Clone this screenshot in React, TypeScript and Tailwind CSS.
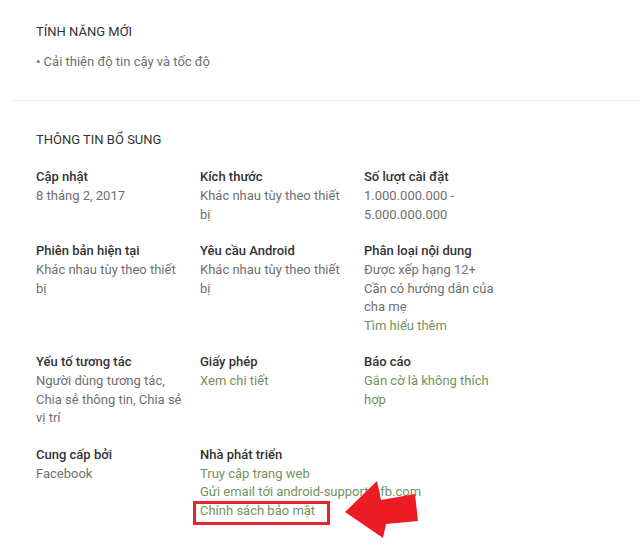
import React from 'react';

type Line = { text: string; link?: boolean; nowrap?: boolean; boxed?: boolean };
type Item = { title: string; lines: Line[] };

const items: Item[] = [
  { title: 'Cập nhật', lines: [{ text: '8 tháng 2, 2017' }] },
  { title: 'Kích thước', lines: [{ text: 'Khác nhau tùy theo thiết bị' }] },
  { title: 'Số lượt cài đặt', lines: [{ text: '1.000.000.000 - 5.000.000.000' }] },
  { title: 'Phiên bản hiện tại', lines: [{ text: 'Khác nhau tùy theo thiết bị' }] },
  { title: 'Yêu cầu Android', lines: [{ text: 'Khác nhau tùy theo thiết bị' }] },
  {
    title: 'Phân loại nội dung',
    lines: [
      { text: 'Được xếp hạng 12+' },
      { text: 'Cần có hướng dẫn của cha mẹ' },
      { text: 'Tìm hiểu thêm', link: true },
    ],
  },
  { title: 'Yếu tố tương tác', lines: [{ text: 'Người dùng tương tác, Chia sẻ thông tin, Chia sẻ vị trí' }] },
  { title: 'Giấy phép', lines: [{ text: 'Xem chi tiết', link: true }] },
  { title: 'Báo cáo', lines: [{ text: 'Gắn cờ là không thích hợp', link: true }] },
  { title: 'Cung cấp bởi', lines: [{ text: 'Facebook' }] },
  {
    title: 'Nhà phát triển',
    lines: [
      { text: 'Truy cập trang web', link: true },
      { text: 'Gửi email tới android-support@fb.com', link: true, nowrap: true },
      { text: 'Chính sách bảo mật', link: true, boxed: true },
    ],
  },
];

function InfoCell({ item }: { item: Item }) {
  return (
    <div className="w-[148px]">
      <div className="text-[13px] leading-[20px] font-medium text-[#333]">{item.title}</div>
      {item.lines.map((line) => (
        <div
          key={line.text}
          className={`text-[13px] leading-[18.5px] ${line.link ? 'text-[#73925c]' : 'text-[#6f6f6f]'} ${
            line.nowrap ? 'whitespace-nowrap' : ''
          }`}
        >
          {line.boxed ? (
            <span className="relative inline-block">
              {line.text}
              {/* red highlight box */}
              <span className="absolute -left-[7px] -right-[15px] -top-[1px] -bottom-[5px] border-[3px] border-[#e3262b]" />
            </span>
          ) : (
            line.text
          )}
        </div>
      ))}
    </div>
  );
}

export default function App() {
  return (
    <div className="relative h-[551px] w-full overflow-hidden bg-white font-['Roboto',sans-serif]">
      {/* What's new */}
      <div className="pl-9 pt-[22px] pb-[29px]">
        <h2 className="text-[13px] leading-[19px] text-[#333]">TÍNH NĂNG MỚI</h2>
        <div className="mt-[11px] text-[13px] leading-[19px] text-[#6f6f6f]">• Cải thiện độ tin cậy và tốc độ</div>
      </div>

      <div className="ml-3 border-t border-[#ececec]" />

      {/* Additional info */}
      <div className="pl-9 pt-[29px]">
        <h2 className="text-[13px] leading-[19px] text-[#333]">THÔNG TIN BỔ SUNG</h2>
        <div className="mt-[18px] grid grid-cols-[148px_148px_148px] gap-x-4 gap-y-[17px]">
          {items.map((item) => (
            <InfoCell key={item.title} item={item} />
          ))}
        </div>
      </div>

      {/* Red arrow annotation */}
      <svg className="absolute left-0 top-0" width="640" height="551" viewBox="0 0 640 551">
        <polygon
          points="345,512 377,481 381,500 415,494 418,521 386,524 383,538"
          fill="#ec1c24"
        />
      </svg>
    </div>
  );
}
